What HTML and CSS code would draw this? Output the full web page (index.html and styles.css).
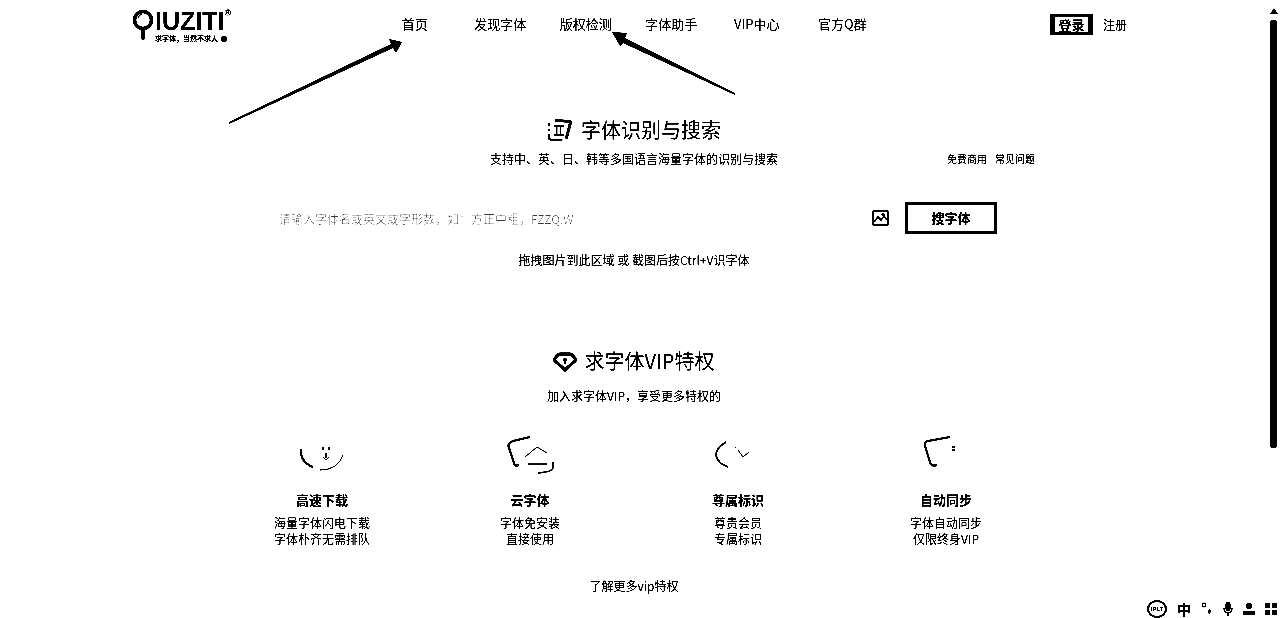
FILE: index.html
```html
<!DOCTYPE html>
<html lang="zh-CN">

<head>
    <meta charset="UTF-8">
    <title>求字体网</title>
    <link rel="stylesheet" href="styles.css">
</head>

<body>
    <div class="page">
        <div class="main">
            <!-- header -->
            <div class="header">
                <a class="logo">
                    <svg class="logo-q" width="24" height="32" viewBox="0 0 24 32">
                        <circle cx="11" cy="11" r="8.5" fill="none" stroke="#000" stroke-width="3.5"/>
                        <path d="M6 9 Q7 6 10 5" fill="none" stroke="#000" stroke-width="1"/>
                        <path d="M11 20 V29" stroke="#000" stroke-width="4" stroke-linecap="round"/>
                    </svg>
                    <div class="logo-text">
                        <div class="logo-name">IUZITI<sup>®</sup></div>
                        <div class="logo-slogan">求字体，当然不求人 <i></i></div>
                    </div>
                </a>
                <div class="nav">
                    <a>首页</a>
                    <a>发现字体</a>
                    <a>版权检测</a>
                    <a>字体助手</a>
                    <a>VIP中心</a>
                    <a>官方Q群</a>
                </div>
                <div class="user">
                    <a class="login"><span>登录</span></a>
                    <a>注册</a>
                </div>
            </div>

            <!-- search -->
            <div class="hero">
                <h2 class="title">
                    <svg width="25" height="24" viewBox="0 0 26 24" fill="none" stroke="#000">
                        <path d="M8 2 L23 3 Q25 3 24 6 L20 21" stroke-width="3"/>
                        <path d="M2 5 V8 M2 11 V13 M2 16 V20 Q2 22 5 22 H16" stroke-width="2"/>
                        <path d="M7 8 H18 M10 9 V17 M14 9 V17 M7 17 H18" stroke-width="1.6"/>
                    </svg>
                    字体识别与搜索
                </h2>
                <div class="sub-row">
                    <span></span>
                    <p>支持中、英、日、韩等多国语言海量字体的识别与搜索</p>
                    <div class="sub-links"><a>免费商用</a><a>常见问题</a></div>
                </div>
                <div class="search">
                    <span class="placeholder">请输入字体名或英文或字形数，如：方正中粗，FZZQ.W</span>
                    <svg class="pic" width="17" height="16" viewBox="0 0 17 16" fill="none" stroke="#000" stroke-width="1.6">
                        <rect x="1" y="1" width="15" height="14" rx="1"/>
                        <path d="M2 12 L6 7 L9 10 L12 6 L15 10"/>
                        <circle cx="11" cy="4.5" r="0.8"/>
                    </svg>
                    <a class="search-btn">搜字体</a>
                </div>
                <p class="drop">拖拽图片到此区域 或 截图后按Ctrl+V识字体</p>
            </div>

            <!-- vip -->
            <div class="vip">
                <h2 class="title title-vip">
                    <svg width="24" height="21" viewBox="0 0 26 22" fill="none" stroke="#000">
                        <path d="M8 3 H18 Q20 3 21 4 L24 8 Q25 10 23 11 L13 20 L3 11 Q1 10 2 8 L5 4 Q6 3 8 3 Z" stroke-width="3.4"/>
                        <circle cx="13" cy="9" r="2" fill="#000" stroke="none"/>
                        <path d="M13 9 V14" stroke-width="2"/>
                    </svg>
                    求字体VIP特权
                </h2>
                <p class="vip-sub">加入求字体VIP，享受更多特权的</p>
                <div class="features">
                    <div class="feature">
                        <svg width="48" height="48" viewBox="0 0 48 48" fill="none" stroke="#000">
                            <path d="M3 17 Q2 30 15 35" stroke-width="2"/>
                            <path d="M22 38 Q40 38 45 23" stroke-width="1"/>
                            <path d="M25 15 V18 M31 15 V18 M28 21 V26 M25 25 L28 28 L31 25" stroke-width="1"/>
                        </svg>
                        <h3>高速下载</h3>
                        <p>海量字体闪电下载<br>字体朴齐无需排队</p>
                    </div>
                    <div class="feature">
                        <svg width="48" height="48" viewBox="0 0 48 48" fill="none" stroke="#000">
                            <path d="M24 5 L7 9 Q1 11 3 16 L8 31 Q9 35 13 33" stroke-width="2.2"/>
                            <path d="M19 25 L31 15 L41 21 M22 32 H41" stroke-width="1"/>
                            <path d="M47 30 V36 Q46 40 32 41" stroke-width="1.3"/>
                        </svg>
                        <h3>云字体</h3>
                        <p>字体免安装<br>直接使用</p>
                    </div>
                    <div class="feature">
                        <svg width="48" height="48" viewBox="0 0 48 48" fill="none" stroke="#000">
                            <path d="M12 10 Q2 16 2 23 Q3 31 14 35" stroke-width="1.8"/>
                            <path d="M24 18 L29 25 L35 20" stroke-width="1"/>
                            <path d="M21 15 L22 16" stroke-width="1"/>
                        </svg>
                        <h3>尊属标识</h3>
                        <p>尊贵会员<br>专属标识</p>
                    </div>
                    <div class="feature">
                        <svg width="48" height="48" viewBox="0 0 48 48" fill="none" stroke="#000">
                            <path d="M28 5 L6 9 Q2 10 3 14 L8 30 Q9 35 15 33" stroke-width="2"/>
                            <path d="M30 15 H33 M30 18 H33" stroke-width="1.2"/>
                        </svg>
                        <h3>自动同步</h3>
                        <p>字体自动同步<br>仅限终身VIP</p>
                    </div>
                </div>
                <a class="more">了解更多vip特权</a>
            </div>
        </div>

        <div class="scrollbar">
            <i class="scroll-up"></i>
            <i class="scroll-thumb"></i>
        </div>

        <!-- annotation arrows drawn over the page -->
        <svg class="arrows" width="1280" height="618" viewBox="0 0 1280 618">
            <polygon points="229,122 229,124 393,48 396,53 402,42 389,39 391,44"/>
            <polygon points="735,93 735,95 623,43 620,46 612,32 627,33 625,38"/>
        </svg>

        <!-- ime toolbar -->
        <div class="ime">
            <span class="ime-badge">IPLT</span>
            <span class="ime-zh">中</span>
            <svg width="12" height="14" viewBox="0 0 12 14">
                <circle cx="3" cy="3" r="1.8" fill="none" stroke="#000" stroke-width="1.2"/>
                <path d="M9 7 Q11 9 8 13 L7 9 Z"/>
            </svg>
            <svg width="10" height="14" viewBox="0 0 10 14" fill="none" stroke="#000">
                <rect x="3" y="0" width="4" height="9" rx="2" fill="#000"/>
                <path d="M1 6 Q1 11 5 11 Q9 11 9 6 M5 11 V14" stroke-width="1.2"/>
            </svg>
            <svg width="12" height="12" viewBox="0 0 12 12">
                <circle cx="6" cy="3" r="3"/>
                <rect x="0" y="8" width="12" height="4"/>
            </svg>
            <svg width="12" height="12" viewBox="0 0 12 12">
                <rect x="0" y="0" width="5" height="5"/>
                <rect x="7" y="0" width="5" height="5"/>
                <rect x="0" y="7" width="5" height="5"/>
                <rect x="7" y="7" width="5" height="5"/>
            </svg>
        </div>
    </div>
</body>

</html>
```

FILE: styles.css
```css
html, body {
    margin: 0;
    padding: 0;
    height: 100%;
    background-color: #fff;
}

body {
    font-family: "Noto Sans CJK SC", "Liberation Sans", sans-serif;
    color: #000;
    overflow: hidden;
}

h2, h3, p {
    margin: 0;
    font-weight: normal;
}

.page {
    position: relative;
    display: flex;
    width: 1280px;
    height: 618px;
    overflow: hidden;
    background-color: #fff;
    filter: grayscale(1) brightness(0.85) contrast(6);
}

.main {
    flex: 1;
    min-width: 0;
}

/* header */
.header {
    display: flex;
    align-items: flex-start;
    height: 50px;
    padding-left: 132px;
}

.logo {
    display: flex;
    width: 240px;
    padding-top: 9px;
}

.logo-text {
    margin-left: -1px;
}

.logo-name {
    font-family: "Liberation Sans", sans-serif;
    font-size: 25px;
    font-weight: bold;
    line-height: 24px;
}

.logo-name sup {
    font-size: 9px;
    line-height: 0;
    vertical-align: 14px;
}

.logo-slogan {
    display: flex;
    align-items: center;
    gap: 3px;
    margin-top: 1px;
    font-size: 7px;
    line-height: 9px;
    font-weight: bold;
}

.logo-slogan i {
    width: 6px;
    height: 6px;
    border-radius: 50%;
    background-color: #000;
}

.nav {
    display: grid;
    grid-template-columns: repeat(6, 85.5px);
    text-align: center;
    font-size: 13px;
    line-height: 18px;
    padding-top: 15px;
}

.user {
    display: flex;
    align-items: center;
    gap: 10px;
    margin-left: 165px;
    padding-top: 14px;
    font-size: 12px;
}

.login {
    display: block;
    box-sizing: border-box;
    width: 43px;
    height: 21px;
    border: 3px solid #000;
    border-left-width: 5px;
    border-right-width: 5px;
    background-color: #fff;
    text-align: center;
    font-size: 13px;
    font-weight: bold;
    line-height: 15px;
}

/* search */
.hero {
    padding-top: 67px;
    text-align: center;
}

.title {
    display: flex;
    justify-content: center;
    align-items: center;
    gap: 9px;
    font-size: 20px;
    line-height: 26px;
}

.title-vip {
    gap: 7px;
}

.sub-row {
    display: grid;
    grid-template-columns: 1fr auto 1fr;
    width: 802px;
    margin: 8px auto 0;
    font-size: 12px;
    line-height: 16px;
}

.sub-links {
    display: flex;
    justify-content: flex-end;
    gap: 8px;
    font-size: 10px;
}

.search {
    display: flex;
    align-items: center;
    width: 718px;
    height: 32px;
    margin: 35px auto 0;
    transform: translateX(4px);
}

.placeholder {
    flex: 1;
    font-size: 12px;
    color: #888;
    text-align: left;
}

.pic {
    margin-right: 16px;
}

.search-btn {
    box-sizing: border-box;
    width: 92px;
    height: 32px;
    border: 3px solid #000;
    font-size: 13px;
    font-weight: bold;
    line-height: 26px;
}

.drop {
    margin-top: 17px;
    font-size: 12px;
    line-height: 17px;
}

/* vip */
.vip {
    padding-top: 80px;
    text-align: center;
}

.vip-sub {
    margin-top: 13px;
    font-size: 12px;
    line-height: 17px;
}

.features {
    display: grid;
    grid-template-columns: repeat(4, 208px);
    justify-content: start;
    margin: 28px 0 0 218px;
}

.feature svg {
    display: block;
    margin: 0 auto;
}

.feature h3 {
    margin-top: 11px;
    font-size: 13px;
    font-weight: bold;
    line-height: 18px;
}

.feature p {
    margin-top: 6px;
    font-size: 12px;
    line-height: 16px;
}

.more {
    display: block;
    margin-top: 30px;
    font-size: 12px;
    line-height: 17px;
}

/* fake scrollbar */
.scrollbar {
    display: flex;
    flex-direction: column;
    align-items: center;
    box-sizing: border-box;
    width: 12px;
    padding: 8px 1px 0 0;
}

.scroll-up {
    width: 0;
    height: 0;
    border-left: 4px solid transparent;
    border-right: 4px solid transparent;
    border-bottom: 6px solid #000;
}

.scroll-thumb {
    width: 7px;
    height: 428px;
    margin-top: 6px;
    border-radius: 3px;
    background-color: #000;
}

.arrows {
    position: absolute;
    left: 0;
    top: 0;
    pointer-events: none;
}

/* ime toolbar */
.ime {
    position: absolute;
    right: 3px;
    bottom: 0;
    display: flex;
    align-items: center;
    gap: 10px;
    height: 18px;
}

.ime-badge {
    box-sizing: border-box;
    width: 20px;
    height: 18px;
    border: 2px solid #000;
    border-radius: 50%;
    font-family: "Liberation Sans", sans-serif;
    font-size: 6px;
    font-weight: bold;
    line-height: 14px;
    text-align: center;
}

.ime-zh {
    font-size: 14px;
    font-weight: bold;
    line-height: 18px;
}
```
